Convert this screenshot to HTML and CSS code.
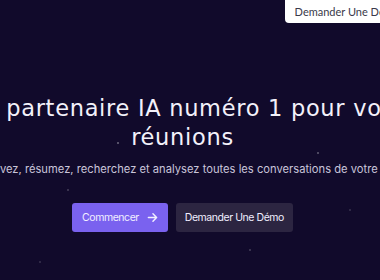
FILE: index.html
```html
<!DOCTYPE html>
<html lang="fr">
<head>
    <meta charset="UTF-8" />
    <meta name="viewport" content="width=device-width, initial-scale=1" />
    <title>Réunions IA</title>
    <link rel="stylesheet" href="styles.css">
</head>
<body>

    <!-- Top bar -->
    <div class="topbar">
        <button class="demo-top">Demander Une Démo</button>
    </div>

    <!-- Hero -->
    <div class="hero">
        <h1>Le partenaire IA numéro 1 pour vos réunions</h1>
        <p class="lead">Transcrivez, résumez, recherchez et analysez toutes les conversations de votre équipe.</p>
        <div class="actions">
            <button class="btn btn-primary">
                Commencer
                <svg width="11" height="11" viewBox="0 0 12 12" fill="none" stroke="currentColor" stroke-width="1.6" stroke-linecap="round" stroke-linejoin="round">
                    <path d="M1.5 6h9M6.5 2l4 4-4 4" />
                </svg>
            </button>
            <button class="btn btn-dark">Demander Une Démo</button>
        </div>
    </div>

</body>
</html>
```

FILE: styles.css
```css
body {
    margin: 0;
    width: 380px;
    height: 280px;
    overflow: hidden;
    font-family: Inter, "Noto Sans", sans-serif;
    background-color: #110a2b;
    background-image:
        radial-gradient(circle at 118px 143px, rgba(255,255,255,0.35) 0.6px, transparent 1.2px),
        radial-gradient(circle at 318px 153px, rgba(255,255,255,0.3) 0.6px, transparent 1.2px),
        radial-gradient(circle at 68px 190px, rgba(255,255,255,0.2) 0.6px, transparent 1.2px),
        radial-gradient(circle at 250px 250px, rgba(255,255,255,0.2) 0.6px, transparent 1.2px),
        radial-gradient(circle at 40px 262px, rgba(255,255,255,0.15) 0.6px, transparent 1.2px),
        radial-gradient(circle at 350px 210px, rgba(255,255,255,0.15) 0.6px, transparent 1.2px);
}

.topbar {
    display: flex;
    justify-content: flex-end;
}

.demo-top {
    margin-top: -4px;
    margin-right: -30px;
    height: 27px;
    padding: 3px 10px 0;
    background: #ffffff;
    color: #3a3a4a;
    border: none;
    border-radius: 4px;
    font-family: Lato, "Noto Sans", sans-serif;
    font-size: 11px;
    white-space: nowrap;
}

.hero {
    display: flex;
    flex-direction: column;
    align-items: center;
    padding-right: 15px;
    padding-top: 71px;
}

h1 {
    flex-shrink: 0;
    width: 470px;
    margin: 0;
    font-family: "DejaVu Sans", sans-serif;
    font-weight: normal;
    font-size: 22.5px;
    letter-spacing: 0.7px;
    line-height: 29px;
    color: #f3f1fa;
    text-align: center;
}

.lead {
    flex-shrink: 0;
    margin: 10px 0 0 12px;
    white-space: nowrap;
    font-size: 11.2px;
    color: #c9c5da;
}

.actions {
    display: flex;
    gap: 8px;
    margin-top: 27px;
}

.btn {
    display: flex;
    align-items: center;
    gap: 8px;
    height: 29px;
    padding: 0 9px;
    border: none;
    border-radius: 3px;
    font-family: Inter, "Noto Sans", sans-serif;
    font-size: 10.5px;
    letter-spacing: -0.45px;
    color: #f1efff;
}

.btn-primary {
    background: #7a62ef;
    padding: 0 10px;
}

.btn-dark {
    background: #2c2541;
}
```
